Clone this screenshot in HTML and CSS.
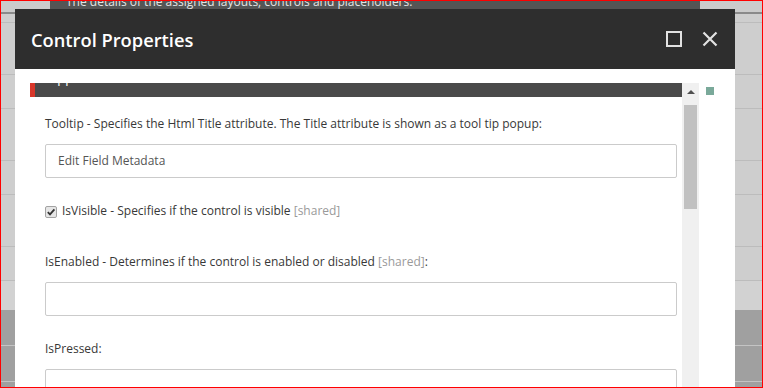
FILE: index.html
```html
<!DOCTYPE html>
<html lang="en">
<head>
    <meta charset="UTF-8">
    <title>Control Properties</title>
    <link rel="stylesheet" href="styles.css">
</head>
<body>
<div class="frame">
    <!-- page behind the dialog -->
    <div class="backdrop">
        <div class="page-top">
            <div class="page-top-side left"></div>
            <div class="page-top-bar">
                <p>The details of the assigned layouts, controls and placeholders.</p>
            </div>
            <div class="page-top-side"></div>
        </div>
        <div class="row r1"></div>
        <div class="row r2"></div>
        <div class="row r3"></div>
        <div class="row r4"></div>
        <div class="row r5"></div>
        <div class="row r6"></div>
        <div class="row r7"></div>
        <div class="row r8"></div>
        <div class="row dark r9"></div>
        <div class="row dark r10"></div>
        <div class="row dark r11"></div>
    </div>

    <!-- dialog -->
    <div class="dialog">
        <div class="dialog-head">
            <h1>Control Properties</h1>
            <div class="head-buttons">
                <svg width="16" height="16" viewBox="0 0 16 16"><rect x="1" y="1" width="14" height="14" fill="none" stroke="#e2e2e2" stroke-width="2"/></svg>
                <svg width="16" height="16" viewBox="0 0 16 16"><path d="M1.5 1.5 L14.5 14.5 M14.5 1.5 L1.5 14.5" stroke="#e2e2e2" stroke-width="2.2" fill="none"/></svg>
            </div>
        </div>
        <div class="dialog-body">
            <div class="panel">
                <div class="section-head">Appearance</div>
                <div class="fields">
                    <div class="label">Tooltip - Specifies the Html Title attribute. The Title attribute is shown as a tool tip popup:</div>
                    <div class="input">Edit Field Metadata</div>

                    <div class="check-row">
                        <svg class="check" width="12" height="12" viewBox="0 0 12 12">
                            <rect x="0.5" y="0.5" width="11" height="11" rx="1.5" fill="#e6e6e6" stroke="#a3a3a3"/>
                            <path d="M2.8 6.2 L5 8.4 L9.4 3.4" fill="none" stroke="#333" stroke-width="1.8"/>
                        </svg>
                        <span>IsVisible - Specifies if the control is visible <span class="shared">[shared]</span></span>
                    </div>

                    <div class="label">IsEnabled - Determines if the control is enabled or disabled <span class="shared">[shared]</span>:</div>
                    <div class="input"></div>

                    <div class="label">IsPressed:</div>
                    <div class="input"></div>
                </div>
            </div>
            <div class="scrollbar">
                <div class="scroll-up"><span class="arrow"></span></div>
                <div class="thumb"></div>
            </div>
            <div class="side">
                <span class="marker"></span>
            </div>
        </div>
    </div>
</div>
</body>
</html>
```

FILE: styles.css
```css
/* page */
body {
    margin: 0;
    font-family: "Open Sans", "Noto Sans", sans-serif;
    overflow: hidden;
}

.frame {
    position: relative;
    box-sizing: border-box;
    width: 763px;
    height: 388px;
    border: 1px solid #f00;
    overflow: hidden;
}

/* page behind */
.backdrop {
    display: flex;
    flex-direction: column;
    background: #cdcdcd;
}

.page-top {
    display: flex;
    height: 11px;
    border-bottom: 2px solid #8a8a8a;
}

.page-top-side {
    flex: 1;
    background: #cbcbcb;
}

.page-top-side.left {
    flex: none;
    width: 49px;
}

.page-top-bar {
    width: 650px;
    background: #555;
    overflow: hidden;
}

.page-top-bar p {
    margin: -7px 0 0 16px;
    font-size: 12px;
    line-height: 16px;
    color: #e4e4e4;
}

.row {
    border-bottom: 1px solid #bcbcbc;
    background: #cecece;
}

.r1 { height: 8px; }
.r2 { height: 51px; }
.r3 { height: 33px; }
.r4 { height: 51px; }
.r5 { height: 33px; }
.r6 { height: 51px; }
.r7 { height: 33px; }
.r8 { height: 29px; border-bottom: none; background: #d2d2d2; }
.dark { background: #a0a0a0; border-bottom-color: #c4c4c4; }
.r9 { height: 35px; }
.r10 { height: 35px; }
.r11 { height: 10px; }

/* dialog */
.dialog {
    position: absolute;
    left: 14px;
    top: 8px;
    width: 720px;
    height: 400px;
    background: #fff;
    display: flex;
    flex-direction: column;
}

.dialog-head {
    flex-shrink: 0;
    height: 60px;
    background: #2e2e2e;
    display: flex;
    align-items: center;
    justify-content: space-between;
    padding: 0 17px 0 16px;
}

.dialog-head h1 {
    margin: 0;
    font-size: 18.3px;
    font-weight: 600;
    color: #fff;
}

.head-buttons {
    display: flex;
    gap: 20px;
}

.dialog-body {
    flex: 1;
    min-height: 0;
    display: flex;
    padding: 14px 0 0 15px;
}

.panel {
    width: 652px;
    overflow: hidden;
}

.section-head {
    height: 30px;
    margin-top: -16px;
    background: #4a4a4a;
    border-left: 5px solid #d8372a;
    padding-left: 14px;
    font-size: 13px;
    line-height: 22px;
    color: #fff;
}

.fields {
    padding: 17px 5px 0 15px;
}

.label, .check-row {
    font-size: 12px;
    line-height: 20px;
    color: #383838;
}

.label {
    margin-bottom: 10px;
}

.shared {
    color: #9a9a9a;
}

.input {
    box-sizing: border-box;
    height: 34px;
    border: 1px solid #cbcbcb;
    border-radius: 2px;
    padding-left: 12px;
    font-size: 12px;
    line-height: 32px;
    color: #555;
    margin-bottom: 23px;
}

.check-row {
    display: flex;
    align-items: center;
    gap: 5px;
    margin-bottom: 31px;
}

.check {
    margin-top: 1px;
}

/* scrollbar */
.scrollbar {
    width: 17px;
    background: #f0f0f0;
}

.scroll-up {
    height: 17px;
    display: flex;
    justify-content: center;
    padding-top: 7px;
    box-sizing: border-box;
}

.arrow {
    width: 0;
    height: 0;
    border-left: 4px solid transparent;
    border-right: 4px solid transparent;
    border-bottom: 4px solid #505050;
}

.thumb {
    width: 13px;
    height: 104px;
    margin: 5px 0 0 2px;
    background: #c1c1c1;
}

.side {
    padding: 4px 0 0 7px;
}

.marker {
    display: block;
    width: 8px;
    height: 8px;
    background: #7aa99a;
}
```
